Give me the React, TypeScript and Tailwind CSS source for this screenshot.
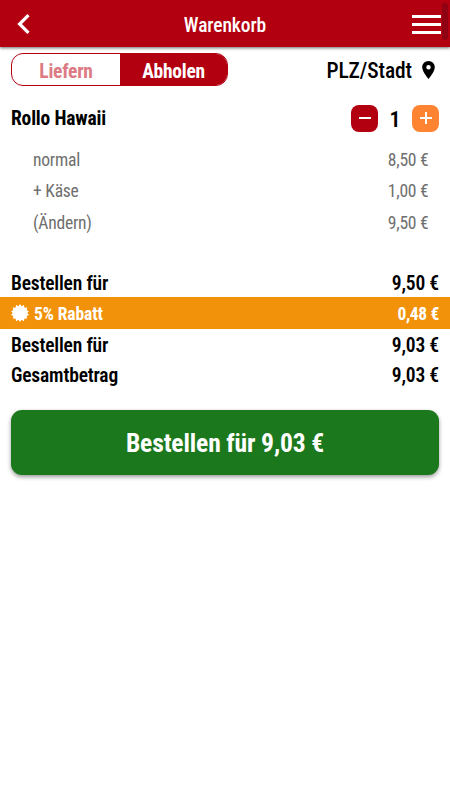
import React from 'react';

interface RowProps {
  label: string;
  price: string;
}

const OptionRow: React.FC<RowProps> = ({ label, price }) => (
  <div className="flex h-[31.5px] items-center justify-between pl-[33px] pr-[21.5px] text-[17.6px] tracking-[-0.25px] text-[#6f6f6f]">
    <span>{label}</span>
    <span>{price}</span>
  </div>
);

const TotalRow: React.FC<RowProps> = ({ label, price }) => (
  <div className="flex h-[30px] items-center justify-between px-[11px] pt-[5px] text-[19.5px] font-semibold tracking-[-0.18px]">
    <span>{label}</span>
    <span>{price}</span>
  </div>
);

const App = () => {
  return (
    <div className="relative h-[800px] w-[450px] overflow-hidden bg-white font-['Roboto_Condensed','Roboto',sans-serif] text-black [font-stretch:75%]">
      <header className="grid h-[47px] grid-cols-[60px_1fr_60px] items-center bg-[#b30010] text-white shadow-[0_1px_3px_rgba(0,0,0,0.6)]">
        <svg className="ml-[17px] h-5 w-[13px]" viewBox="0 0 13 20" fill="none" stroke="currentColor" strokeWidth="3.2">
          <path d="M11.5 1.2 2.6 10l8.9 8.8" />
        </svg>
        <h1 className="pt-[5px] text-center text-[19.5px] font-medium tracking-[-0.1px]">Warenkorb</h1>
        <div className="ml-[22px] flex w-[29px] flex-col gap-[5px] pt-px">
          <div className="h-[3px] bg-white" />
          <div className="h-[3px] bg-white" />
          <div className="h-[3px] bg-white" />
        </div>
      </header>
      <div className="absolute left-[442px] top-[3px] h-[37px] w-[6px] rounded-full bg-[#8e0012]" />

      <div className="mt-[6px] flex h-[33px] items-center justify-between pl-[11px] pr-[15px]">
        <div className="flex h-[33px] w-[217px] overflow-hidden rounded-[12px] border border-[#b30010] text-[19.5px] font-bold tracking-[-0.25px]">
          <div className="flex w-[108px] items-center justify-center pt-[5px] text-[#dc7b84]">Liefern</div>
          <div className="flex flex-1 items-center justify-center bg-[#b30010] pt-[5px] text-white">Abholen</div>
        </div>
        <div className="flex items-center font-medium">
          <span className="pt-[4px] text-[21.5px] tracking-[-0.1px]">PLZ/Stadt</span>
          <svg className="ml-[10px] h-[18px] w-[13px]" viewBox="5 2 14 20" fill="currentColor">
            <path fillRule="evenodd" d="M12 2C8.13 2 5 5.13 5 9c0 5.25 7 13 7 13s7-7.75 7-13c0-3.87-3.13-7-7-7Zm0 4.5a2.5 2.5 0 1 1 0 5 2.5 2.5 0 0 1 0-5Z" />
          </svg>
        </div>
      </div>

      <div className="mt-[18px] flex h-[28px] items-center pl-[11px] pr-[11px]">
        <span className="flex-1 pt-[2px] text-[19.5px] font-bold tracking-[-0.18px]">Rollo Hawaii</span>
        <button className="flex h-[27px] w-[27px] items-center justify-center rounded-[8px] bg-[#b30010]">
          <svg className="h-[12px] w-[12px]" viewBox="0 0 12 12" stroke="white" strokeWidth="2">
            <path d="M0 6h12" />
          </svg>
        </button>
        <span className="w-[34px] pt-[2px] text-center text-[22px] font-semibold">1</span>
        <button className="flex h-[27px] w-[27px] items-center justify-center rounded-[8px] bg-[#ff8432]">
          <svg className="h-[12px] w-[12px]" viewBox="0 0 12 12" stroke="white" strokeWidth="2">
            <path d="M0 6h12M6 0v12" />
          </svg>
        </button>
      </div>

      <div className="mt-[12px]">
        <OptionRow label="normal" price="8,50 €" />
        <OptionRow label="+ Käse" price="1,00 €" />
        <OptionRow label="(Ändern)" price="9,50 €" />
      </div>

      <div className="mt-[28px]">
        <TotalRow label="Bestellen für" price="9,50 €" />
        <div className="flex h-[32px] items-center bg-[#f2920a] px-[11px] text-[17.5px] font-bold tracking-[-0.1px] text-white">
          <svg className="mr-[5px] h-[18px] w-[18px]" viewBox="0 0 18 18" fill="currentColor">
            <path d="M9 0l1.5 2.3L12.9.9l.6 2.8 2.8-.1-.6 2.6L18 7.5 16.2 9l1.8 2-2.4 1 .7 2.6-2.8-.1-.6 2.7-2.4-1.4L9 18l-1.5-2.2-2.4 1.4-.6-2.7-2.8.1.7-2.6L0 11l1.8-2L0 7.5l2.3-1.3-.6-2.6 2.8.1.6-2.8 2.4 1.4Z" />
          </svg>
          <span className="flex-1 pt-[3px]">5% Rabatt</span>
          <span className="pt-[3px] tracking-[-0.35px]">0,48 €</span>
        </div>
        <TotalRow label="Bestellen für" price="9,03 €" />
        <TotalRow label="Gesamtbetrag" price="9,03 €" />
      </div>

      <button className="mx-[11px] mt-[21px] flex h-[65px] w-[428px] items-center justify-center rounded-[11px] bg-[#1c781c] text-[25.6px] font-bold tracking-[-0.15px] text-white shadow-[0_2px_4px_rgba(0,0,0,0.4)]">
        <span className="pt-[3px]">Bestellen für 9,03 €</span>
      </button>
    </div>
  );
};

export default App;
